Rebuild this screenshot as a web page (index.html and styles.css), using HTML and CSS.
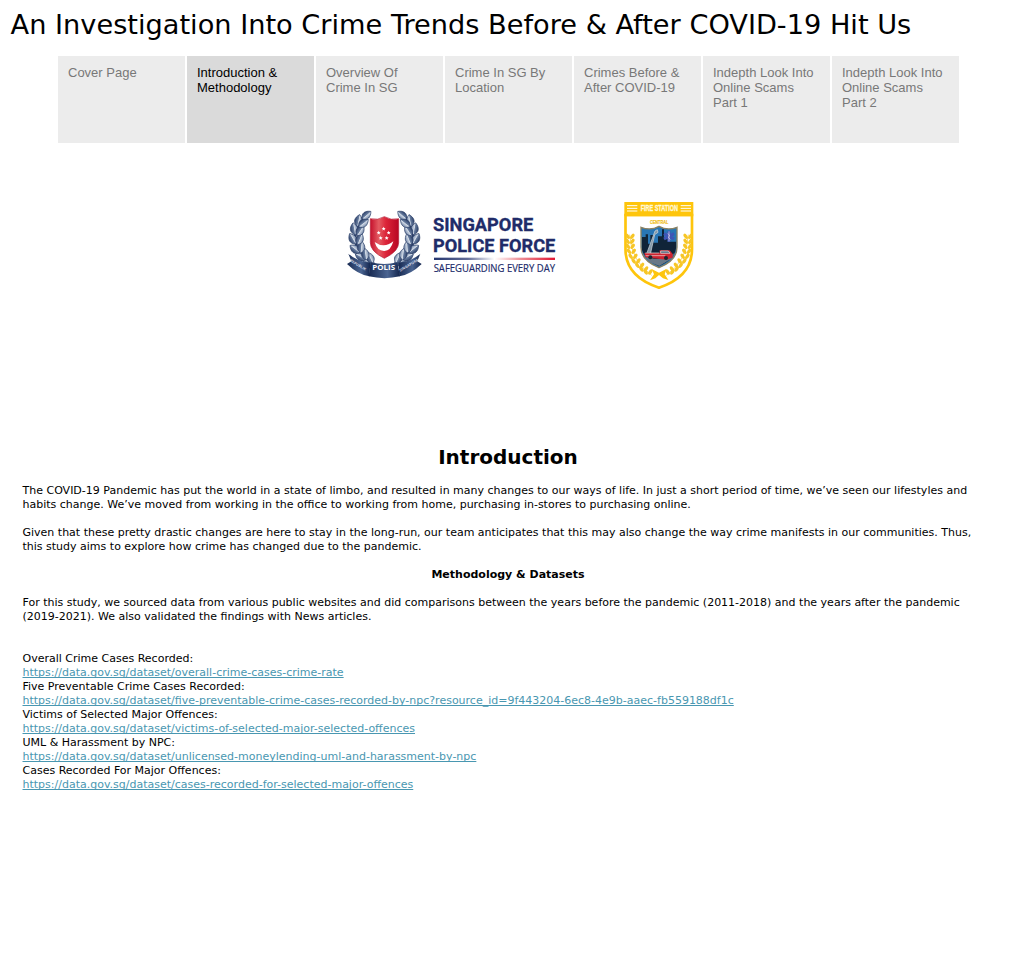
FILE: index.html
```html
<!DOCTYPE html>
<html lang="en">
<head>
<meta charset="utf-8">
<title>An Investigation Into Crime Trends</title>
<link rel="stylesheet" href="styles.css">
</head>
<body>
<main class="story">
  <h1 class="story-title">An Investigation Into Crime Trends Before &amp; After COVID-19 Hit Us</h1>
  <nav class="points">
    <a class="point">Cover Page</a>
    <a class="point active">Introduction &amp; Methodology</a>
    <a class="point">Overview Of Crime In SG</a>
    <a class="point">Crime In SG By Location</a>
    <a class="point">Crimes Before &amp; After COVID-19</a>
    <a class="point">Indepth Look Into Online Scams Part 1</a>
    <a class="point">Indepth Look Into Online Scams Part 2</a>
  </nav>
  <section class="logos">
    <svg class="crest" viewBox="0 0 270 270" role="img" aria-label="Police crest">
      <defs>
        <linearGradient id="leaf" x1="0" x2="1"><stop offset="0" stop-color="#2c4069"/><stop offset=".45" stop-color="#687d9f"/><stop offset=".55" stop-color="#d3dbe7"/><stop offset="1" stop-color="#6f84a5"/></linearGradient>
        <linearGradient id="ribbon" x1="0" x2="1"><stop offset="0" stop-color="#172951"/><stop offset=".6" stop-color="#4a6491"/><stop offset="1" stop-color="#14264e"/></linearGradient>
        <linearGradient id="red" x1="0" x2="1"><stop offset="0" stop-color="#c5102c"/><stop offset=".3" stop-color="#e45b62"/><stop offset=".55" stop-color="#dc2539"/><stop offset="1" stop-color="#b80623"/></linearGradient>
        <path id="l" d="M0 2C-16-7-14-22 0-34 14-22 16-7 0 2Z" fill="url(#leaf)" stroke="#2b3f68" stroke-width="2"/>
        <g id="wreath">
          <path d="M98 190Q44 165 46 108 50 65 80 42" fill="none" stroke="#2b3f68" stroke-width="8"/>
          <use href="#l" transform="translate(101 190) rotate(-75)"/>
          <use href="#l" transform="translate(97 188) rotate(-25)"/>
          <use href="#l" transform="translate(76 178) rotate(-62)"/>
          <use href="#l" transform="translate(78 178) rotate(-8)"/>
          <use href="#l" transform="translate(57 157) rotate(-52)"/>
          <use href="#l" transform="translate(62 157) rotate(5)"/>
          <use href="#l" transform="translate(46 130) rotate(-30)"/>
          <use href="#l" transform="translate(53 132) rotate(22)"/>
          <use href="#l" transform="translate(45 102) rotate(-10)"/>
          <use href="#l" transform="translate(52 105) rotate(33)"/>
          <use href="#l" transform="translate(52 77) rotate(12)"/>
          <use href="#l" transform="translate(58 79) rotate(52)"/>
          <use href="#l" transform="translate(68 55) rotate(50) scale(.95)"/>
        </g>
      </defs>
      <use href="#wreath"/>
      <use href="#wreath" transform="translate(266 0) scale(-1 1)"/>
      <path d="M91 56Q113 62 133 50 154 62 176 56V128Q176 154 133 175 91 154 91 128Z" fill="url(#red)" stroke="#b31d38" stroke-width="2"/>
      <path d="M104 126Q132 147 160 124 152 154 132 153 111 152 104 126Z" fill="#fff"/>
      <g fill="#fff">
        <path id="star" d="m131 80 1.700 4 4.300.4-3.300 2.800 1 4.200-3.700-2.200-3.700 2.200 1-4.200-3.300-2.800 4.300-.4Z"/>
        <use href="#star" x="-15" y="12"/><use href="#star" x="15" y="12"/>
        <use href="#star" x="-9" y="28"/><use href="#star" x="9" y="28"/>
      </g>
      <path d="M25 161Q50 184 91 188L88 229Q54 224 21 192L34 184Z" fill="url(#ribbon)"/>
      <path d="M241 161Q216 184 175 188L178 229Q212 224 245 192L232 184Z" fill="url(#ribbon)"/>
      <path d="M86 229 92 187Q133 197 172 187L180 229Q134 240 86 229Z" fill="url(#ribbon)"/>
      <text class="crest-name" x="97" y="209" textLength="68" lengthAdjust="spacingAndGlyphs">POLIS</text>
      <text class="crest-small" transform="translate(29 184) rotate(31)" textLength="54" lengthAdjust="spacingAndGlyphs">REPUBLIK</text>
      <text class="crest-small" transform="translate(181 215) rotate(-31)" textLength="64" lengthAdjust="spacingAndGlyphs">SINGAPURA</text>
    </svg>
    <svg class="wordmark" viewBox="0 0 420 240" role="img" aria-label="Singapore Police Force">
      <defs><linearGradient id="rule" x1="0" x2="1"><stop offset="0" stop-color="#26366f"/><stop offset=".28" stop-color="#626c98"/><stop offset=".5" stop-color="#fff"/><stop offset=".72" stop-color="#ee8b93"/><stop offset="1" stop-color="#e21733"/></linearGradient></defs>
      <text class="force" x="24" y="79" textLength="301" lengthAdjust="spacingAndGlyphs">SINGAPORE</text>
      <text class="force" x="24" y="142" textLength="367" lengthAdjust="spacingAndGlyphs">POLICE FORCE</text>
      <rect x="27" y="158" width="363" height="7" fill="url(#rule)"/>
      <text class="motto" x="26" y="200" textLength="364" lengthAdjust="spacingAndGlyphs">SAFEGUARDING EVERY DAY</text>
    </svg>
    <svg class="badge" viewBox="0 0 270 300" role="img" aria-label="Central Fire Station">
      <defs><g id="grain" fill="#f7c626">
        <path d="M44 119Q48 197 110 241" fill="none" stroke="#f7c626" stroke-width="2"/>
        <g id="sprig"><ellipse cx="38" cy="124" rx="5" ry="9" transform="rotate(-35 38 124)"/><ellipse cx="52" cy="124" rx="5" ry="9" transform="rotate(35 52 124)"/></g>
        <use href="#sprig" y="15"/><use href="#sprig" x="1" y="30"/><use href="#sprig" x="4" y="45"/><use href="#sprig" x="9" y="60"/><use href="#sprig" x="18" y="74"/><use href="#sprig" x="29" y="87"/><use href="#sprig" x="41" y="98"/><use href="#sprig" x="54" y="107"/>
      </g></defs>
      <path d="M31.500 60V163Q31.500 245 132 278 231 245 231 163V60Z" fill="#fff" stroke="#fec50c" stroke-width="8"/>
      <path d="M28 21H235V64H28Z" fill="#fec50c"/>
      <path d="M36 32H67M36 40H67M36 48H67M197 32H228M197 40H228M197 48H228" stroke="#fff" stroke-width="3"/>
      <text class="station" x="77" y="49" textLength="112" lengthAdjust="spacingAndGlyphs">FIRE STATION</text>
      <text class="central" x="105" y="86" textLength="55" lengthAdjust="spacingAndGlyphs">CENTRAL</text>
      <use href="#grain"/><use href="#grain" transform="translate(264 0) scale(-1 1)"/>
      <path d="M132 233 110 222 117 238 105 256 121 250 132 240 144 250 160 255 149 238 154 222Z" fill="#fec50c"/>
      <path d="M78 97Q107 108 132 94 157 108 186 97V157Q186 197 132 218 78 197 78 157Z" fill="#2876b5" stroke="#8a8061" stroke-width="4"/>
      <path d="M81 145V126H92V118H99V146H106V120H115V143H129V124H141V103H147V126H158V140H183V160Q180 191 132 214 91 195 81 165Z" fill="#102438"/>
      <path d="M88 181Q130 206 178 175L169 191 133 213 105 202Z" fill="#687887"/>
      <path d="M96 173 120 108 127 104 129 112 119 119 107 174" fill="#8398a8" stroke="#d4dce1" stroke-width="2"/>
      <path d="M88 174H134V166H164L173 177V188L154 194 91 187Z" fill="#cc2431"/>
      <path d="M91 174H133M137 168H160L165 175H137ZM92 182H151" fill="#577084" stroke="#f0dfdc" stroke-width="2"/>
      <circle cx="106" cy="187" r="6" fill="#182530"/><circle cx="153" cy="189" r="6" fill="#182530"/>
      <path d="M162 108V140M147 116 177 132M147 132 177 116" stroke="#4055b6" stroke-width="9"/>
      <path d="M162 109V139M158 116Q167 120 162 124 157 128 166 133" fill="none" stroke="#e4d6ec" stroke-width="2"/>
    </svg>
  </section>
  <article class="copy">
    <h2 class="heading">Introduction</h2>
    <p class="para">The COVID-19 Pandemic has put the world in a state of limbo, and resulted in many changes to our ways of life. In just a short period of time, we’ve seen our lifestyles and<br>habits change. We’ve moved from working in the office to working from home, purchasing in-stores to purchasing online.</p>
    <p class="para">Given that these pretty drastic changes are here to stay in the long-run, our team anticipates that this may also change the way crime manifests in our communities. Thus,<br>this study aims to explore how crime has changed due to the pandemic.</p>
    <h3 class="subheading">Methodology &amp; Datasets</h3>
    <p class="para">For this study, we sourced data from various public websites and did comparisons between the years before the pandemic (2011-2018) and the years after the pandemic<br>(2019-2021). We also validated the findings with News articles.</p>
    <div class="sources">
      <div>Overall Crime Cases Recorded:</div>
      <div><a class="link">https://data.gov.sg/dataset/overall-crime-cases-crime-rate</a></div>
      <div>Five Preventable Crime Cases Recorded:</div>
      <div><a class="link">https://data.gov.sg/dataset/five-preventable-crime-cases-recorded-by-npc?resource_id=9f443204-6ec8-4e9b-aaec-fb559188df1c</a></div>
      <div>Victims of Selected Major Offences:</div>
      <div><a class="link">https://data.gov.sg/dataset/victims-of-selected-major-selected-offences</a></div>
      <div>UML &amp; Harassment by NPC:</div>
      <div><a class="link">https://data.gov.sg/dataset/unlicensed-moneylending-uml-and-harassment-by-npc</a></div>
      <div>Cases Recorded For Major Offences:</div>
      <div><a class="link">https://data.gov.sg/dataset/cases-recorded-for-selected-major-offences</a></div>
    </div>
  </article>
</main>
</body>
</html>
```
FILE: styles.css
```css
* { box-sizing: border-box; }
body { margin: 0; background: #fff; color: #000; font-family: "DejaVu Sans", sans-serif; }
.story { width: 1016px; height: 964px; overflow: hidden; }
.story-title { margin: 0; padding: 8px 0 0 10.6px; height: 56px; font-size: 27.2px; font-weight: 400; line-height: 33px; white-space: nowrap; }
.points { display: flex; gap: 2px; padding-left: 58px; }
.point { width: 127px; height: 87px; padding: 9px 10px; background: #ececec; color: #787878; font: 13px/15px "Liberation Sans", Arial, sans-serif; }
.point.active { background: #dadada; color: #000; }
.logos { display: flex; height: 300px; padding: 52px 0 0 340px; }
.crest { width: 90px; height: 90px; margin-top: 5px; }
.wordmark { width: 140px; height: 80px; margin: 10px 50px 0 -5px; }
.badge { width: 90px; height: 100px; }
.crest-name { font: bold 20px "Open Sans", sans-serif; fill: #fff; }
.crest-small { font: bold 11px "Open Sans", sans-serif; fill: #d4dbe7; }
.force { font: bold 56px Roboto, sans-serif; fill: #202b69; stroke: #202b69; stroke-width: 1px; }
.motto { font: 30px "Open Sans", sans-serif; fill: #202b69; stroke: #202b69; stroke-width: .5px; }
.station { font: bold 25px "Liberation Sans", sans-serif; fill: #fff8d8; stroke: #fff8d8; stroke-width: 1px; }
.central { font: bold 18px "Liberation Sans", sans-serif; fill: #f0bd20; stroke: #f0bd20; stroke-width: .7px; }
.copy { padding: 2px 22.5px 0; font-size: 11px; line-height: 14px; }
.heading { margin: 0 0 15px; font-size: 20px; line-height: 24px; text-align: center; }
.para { margin: 0 0 14px; white-space: nowrap; }
.subheading { margin: 0 0 14px; font-size: inherit; text-align: center; }
.sources { padding-top: 14px; white-space: nowrap; }
.link { color: #4997b1; text-decoration: underline; text-decoration-skip-ink: none; }
```
